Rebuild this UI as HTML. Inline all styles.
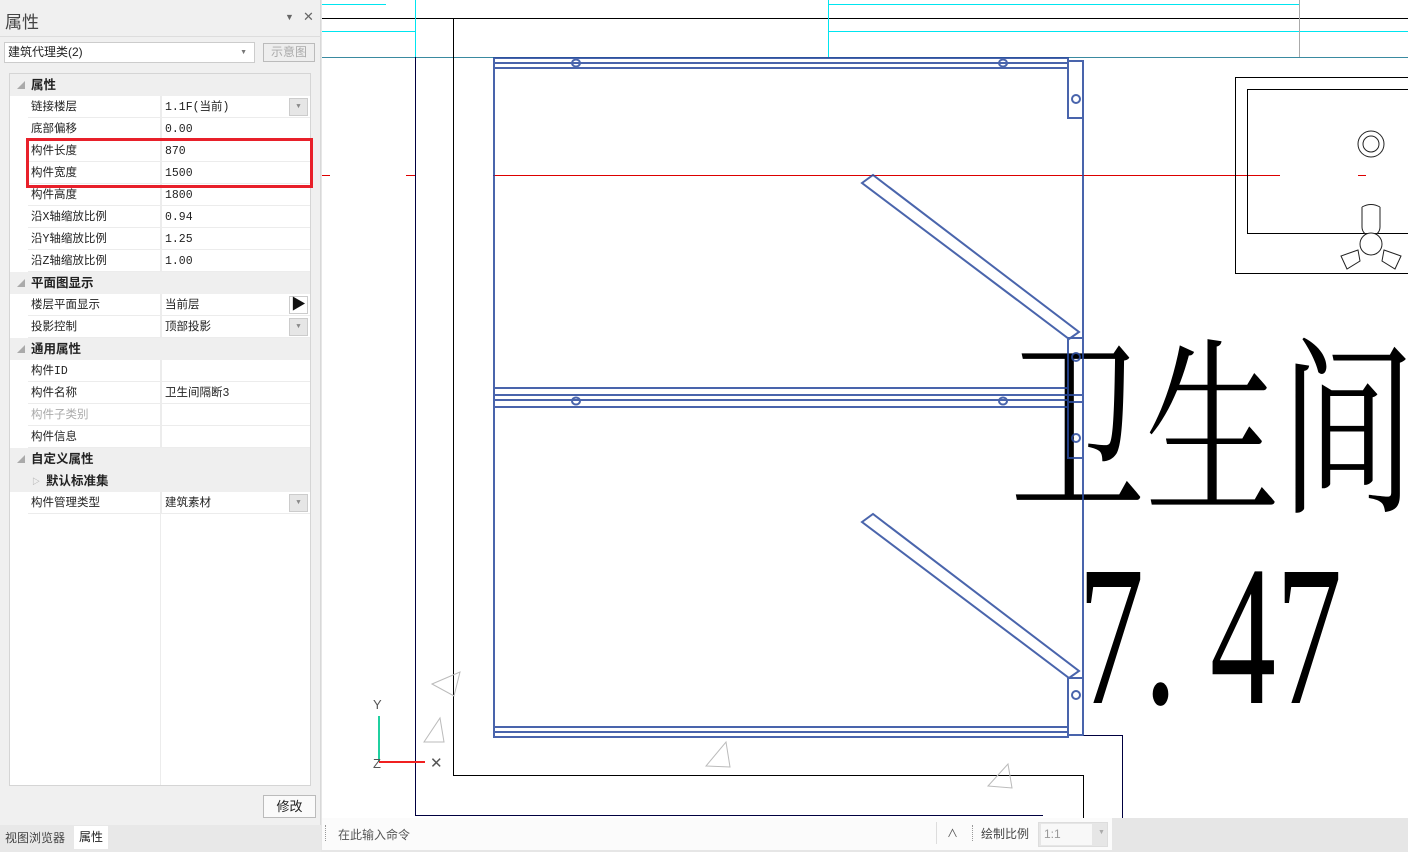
<!DOCTYPE html>
<html><head><meta charset="utf-8">
<style>
*{margin:0;padding:0;box-sizing:border-box}
body{width:1408px;height:852px;position:relative;overflow:hidden;background:#e6e6e6;font-family:"Liberation Sans","Noto Sans CJK SC",sans-serif;font-size:12px;color:#222}
.panel{position:absolute;left:0;top:0;width:321px;height:852px;background:#f0f0f0;border-right:1px solid #d8d8d8}
.abs{position:absolute}
.grid{position:absolute;left:9px;top:73px;width:302px;height:713px;background:#fff;border:1px solid #d5d5d5}
.row{position:absolute;left:18px;width:282px;height:22px;border-bottom:1px solid #ececec;line-height:23px;font-family:"Liberation Mono","Noto Sans CJK SC",monospace;font-size:11.5px}
.row .l{position:absolute;left:3px}
.row .v{position:absolute;left:137px}
.row .sep{position:absolute;left:133px;top:0;width:1px;height:22px;background:#ececec}
.hdr{position:absolute;left:0;width:300px;height:22px;background:#efefef;line-height:23px;font-weight:bold;font-size:12.5px}
.hdr .t{position:absolute;left:21px}
.hdr .a{position:absolute;left:7px;color:#aaa;font-size:8px}
.dd{position:absolute;right:2px;top:2px;width:19px;height:18px;background:#e6e6e6;border:1px solid #ccc;font-size:7px;color:#888;text-align:center;line-height:16px}
</style></head><body>
<svg class="abs" style="left:322px;top:0" width="1086" height="818" viewBox="322 0 1086 818">
<rect x="322" y="0" width="1086" height="818" fill="#fff"/>
<g stroke-width="1" fill="none" shape-rendering="crispEdges">
<line x1="322" y1="4.5" x2="386" y2="4.5" stroke="#00e5f0"/>
<line x1="828" y1="4.5" x2="1300" y2="4.5" stroke="#00e5f0"/>
<line x1="322" y1="18.5" x2="1408" y2="18.5" stroke="#000"/>
<line x1="322" y1="31.5" x2="415" y2="31.5" stroke="#00e5f0"/>
<line x1="828" y1="31.5" x2="1408" y2="31.5" stroke="#00e5f0"/>
<line x1="322" y1="57.5" x2="1408" y2="57.5" stroke="#3a8aa0"/>
<line x1="415.5" y1="0" x2="415.5" y2="57" stroke="#00e5f0"/>
<line x1="828.5" y1="0" x2="828.5" y2="57" stroke="#00e5f0"/>
<line x1="1299.5" y1="0" x2="1299.5" y2="57" stroke="#aaa"/>
<line x1="415.5" y1="57" x2="415.5" y2="815" stroke="#000040"/>
<line x1="453.5" y1="18" x2="453.5" y2="775" stroke="#000"/>
<line x1="453" y1="775.5" x2="1083" y2="775.5" stroke="#000"/>
<line x1="1083.5" y1="775" x2="1083.5" y2="818" stroke="#000"/>
<line x1="415" y1="815.5" x2="1043" y2="815.5" stroke="#000040"/>
<line x1="1083" y1="735.5" x2="1122" y2="735.5" stroke="#000040"/>
<line x1="1122.5" y1="735" x2="1122.5" y2="818" stroke="#000040"/>
<line x1="322" y1="175.5" x2="330" y2="175.5" stroke="#d00"/>
<line x1="406" y1="175.5" x2="415" y2="175.5" stroke="#d00"/>
<line x1="493" y1="175.5" x2="1280" y2="175.5" stroke="#d00"/>
<line x1="1358" y1="175.5" x2="1366" y2="175.5" stroke="#d00"/>
<rect x="1235.5" y="77.5" width="200" height="196" stroke="#000"/>
<rect x="1247.5" y="89.5" width="200" height="144" stroke="#000"/>
</g>
<circle cx="1371" cy="144" r="13" fill="none" stroke="#222"/>
<circle cx="1371" cy="144" r="8" fill="none" stroke="#222"/>
<path d="M1362 207v20a9 9 0 0 0 18 0v-20M1362 207q9-5 18 0" fill="none" stroke="#222"/>
<circle cx="1371" cy="244" r="11" fill="#fff" stroke="#222"/>
<path d="M1358 250l-17 6 6 13 13-8zM1384 250l17 6-6 13-13-8z" fill="#fff" stroke="#222"/>
<g fill="none" stroke="#bbb">
<path d="M432 684l28-12-6 24z"/><path d="M424 742l20 0-4-24z"/><path d="M706 766l24 1-4-25z"/><path d="M988 786l24 2-4-24z"/>
</g>
<text x="1010" y="498" font-family="Noto Serif CJK SC, serif" font-size="190" fill="#000" textLength="405" lengthAdjust="spacingAndGlyphs">卫生间</text>
<text x="1078" y="703" font-family="Liberation Serif, serif" font-size="200" fill="#000" textLength="264" lengthAdjust="spacingAndGlyphs">7. 47</text>
<g stroke="#2a4a9e" stroke-width="2" fill="none" opacity="0.85">
<rect x="494" y="58" width="574" height="10"/>
<line x1="494" y1="63" x2="1068" y2="63"/>
<line x1="494" y1="58" x2="494" y2="737"/>
<rect x="1068" y="61" width="15" height="57"/>
<line x1="1083" y1="118" x2="1083" y2="735"/>
<rect x="494" y="388" width="574" height="19"/>
<line x1="494" y1="395" x2="1068" y2="395"/><line x1="494" y1="400" x2="1068" y2="400"/>
<rect x="494" y="727" width="574" height="10"/>
<line x1="494" y1="732" x2="1068" y2="732"/>
<rect x="1068" y="338" width="15" height="57"/>
<rect x="1068" y="402" width="15" height="56"/>
<rect x="1068" y="678" width="15" height="57"/>
<polygon points="862,183 873,175 1079,332 1069,339"/>
<polygon points="862,522 873,514 1079,671 1069,678"/>
<ellipse cx="576" cy="63" rx="4" ry="3.5"/><ellipse cx="1003" cy="63" rx="4" ry="3.5"/>
<ellipse cx="576" cy="401" rx="4" ry="3.5"/><ellipse cx="1003" cy="401" rx="4" ry="3.5"/>
<ellipse cx="1076" cy="99" rx="4" ry="4"/><ellipse cx="1076" cy="357" rx="4" ry="4"/>
<ellipse cx="1076" cy="438" rx="4" ry="4"/><ellipse cx="1076" cy="695" rx="4" ry="4"/>
</g>
<line x1="379" y1="716" x2="379" y2="762" stroke="#20d0a0" stroke-width="2"/>
<line x1="379" y1="762" x2="425" y2="762" stroke="#f02020" stroke-width="2"/>
<text x="373" y="709" font-size="13" fill="#555" font-family="Liberation Sans">Y</text>
<text x="373" y="768" font-size="13" fill="#555" font-family="Liberation Sans">Z</text>
<text x="430" y="768" font-size="15" fill="#555" font-family="Liberation Sans">✕</text>
</svg>

<div class="panel">
 <div class="abs" style="left:5px;top:8px;font-size:17px;color:#444">属性</div>
 <div class="abs" style="left:285px;top:12px;font-size:9px;color:#666">▼</div>
 <div class="abs" style="left:303px;top:9px;font-size:13px;color:#666">✕</div>
 <div class="abs" style="left:0;top:36px;width:321px;height:1px;background:#ddd"></div>
 <div class="abs" style="left:4px;top:42px;width:251px;height:21px;background:#fff;border:1px solid #ccc;line-height:19px;padding-left:3px;font-size:12px">建筑代理类(2)<span style="position:absolute;right:7px;font-size:7px;color:#777">▼</span></div>
 <div class="abs" style="left:263px;top:43px;width:52px;height:19px;border:1px solid #bbb;background:#eee;color:#aaa;text-align:center;line-height:17px;font-size:12px">示意图</div>
 <div class="grid">
  <div class="abs" style="left:150px;top:0;width:1px;height:711px;background:#ececec"></div>
  <div class="hdr" style="top:0"><span class="a">◢</span><span class="t">属性</span></div>
  <div class="row" style="top:22px"><span class="l">链接楼层</span><span class="sep"></span><span class="v">1.1F(当前)</span><span class="dd">▼</span></div>
  <div class="row" style="top:44px"><span class="l">底部偏移</span><span class="sep"></span><span class="v">0.00</span></div>
  <div class="row" style="top:66px"><span class="l">构件长度</span><span class="sep"></span><span class="v">870</span></div>
  <div class="row" style="top:88px"><span class="l">构件宽度</span><span class="sep"></span><span class="v">1500</span></div>
  <div class="row" style="top:110px"><span class="l">构件高度</span><span class="sep"></span><span class="v">1800</span></div>
  <div class="row" style="top:132px"><span class="l">沿X轴缩放比例</span><span class="sep"></span><span class="v">0.94</span></div>
  <div class="row" style="top:154px"><span class="l">沿Y轴缩放比例</span><span class="sep"></span><span class="v">1.25</span></div>
  <div class="row" style="top:176px"><span class="l">沿Z轴缩放比例</span><span class="sep"></span><span class="v">1.00</span></div>
  <div class="hdr" style="top:198px"><span class="a">◢</span><span class="t">平面图显示</span></div>
  <div class="row" style="top:220px"><span class="l">楼层平面显示</span><span class="sep"></span><span class="v">当前层</span><span class="dd" style="background:#fff;color:#111;font-size:15px;line-height:17px">▶</span></div>
  <div class="row" style="top:242px"><span class="l">投影控制</span><span class="sep"></span><span class="v">顶部投影</span><span class="dd">▼</span></div>
  <div class="hdr" style="top:264px"><span class="a">◢</span><span class="t">通用属性</span></div>
  <div class="row" style="top:286px"><span class="l">构件ID</span><span class="sep"></span></div>
  <div class="row" style="top:308px"><span class="l">构件名称</span><span class="sep"></span><span class="v">卫生间隔断3</span></div>
  <div class="row" style="top:330px;color:#aaa"><span class="l">构件子类别</span><span class="sep"></span></div>
  <div class="row" style="top:352px"><span class="l">构件信息</span><span class="sep"></span></div>
  <div class="hdr" style="top:374px"><span class="a">◢</span><span class="t">自定义属性</span></div>
  <div class="hdr" style="top:396px"><span class="a" style="left:22px">▷</span><span class="t" style="left:36px">默认标准集</span></div>
  <div class="row" style="top:418px"><span class="l">构件管理类型</span><span class="sep"></span><span class="v">建筑素材</span><span class="dd">▼</span></div>
 </div>
 <div class="abs" style="left:26px;top:138px;width:287px;height:50px;border:3px solid #e8202a"></div>
 <div class="abs" style="left:263px;top:795px;width:53px;height:23px;border:1px solid #bbb;background:#fafafa;text-align:center;line-height:21px;font-size:13px">修改</div>
 <div class="abs" style="left:0;top:825px;width:321px;height:27px;background:#e8e8e8"></div>
 <div class="abs" style="left:5px;top:829px;font-size:12px;color:#444">视图浏览器</div>
 <div class="abs" style="left:74px;top:826px;width:34px;height:23px;background:#fff;text-align:center;line-height:22px;font-size:12px">属性</div>
</div>
<div class="abs" style="left:322px;top:818px;width:646px;height:32px;background:#fbfbfb"></div>
<div class="abs" style="left:325px;top:825px;width:1px;height:16px;border-left:1px dotted #999"></div>
<div class="abs" style="left:338px;top:826px;font-size:12px;color:#555">在此输入命令</div>
<div class="abs" style="left:936px;top:822px;width:1px;height:22px;background:#ddd"></div>
<div class="abs" style="left:947px;top:825px;font-size:11px;color:#555">∧</div>
<div class="abs" style="left:968px;top:818px;width:144px;height:32px;background:#fbfbfb"></div>
<div class="abs" style="left:972px;top:825px;width:1px;height:16px;border-left:1px dotted #999"></div>
<div class="abs" style="left:981px;top:825px;font-size:12px;color:#444">绘制比例</div>
<div class="abs" style="left:1038px;top:822px;width:70px;height:25px;background:#e6e6e6;border:1px solid #ddd"></div>
<div class="abs" style="left:1041px;top:824px;width:51px;height:21px;background:#f8f8f8;line-height:21px;font-size:12px;color:#999;padding-left:3px">1:1</div>
<div class="abs" style="left:1098px;top:829px;font-size:7px;color:#aaa">▼</div>
</body></html>
